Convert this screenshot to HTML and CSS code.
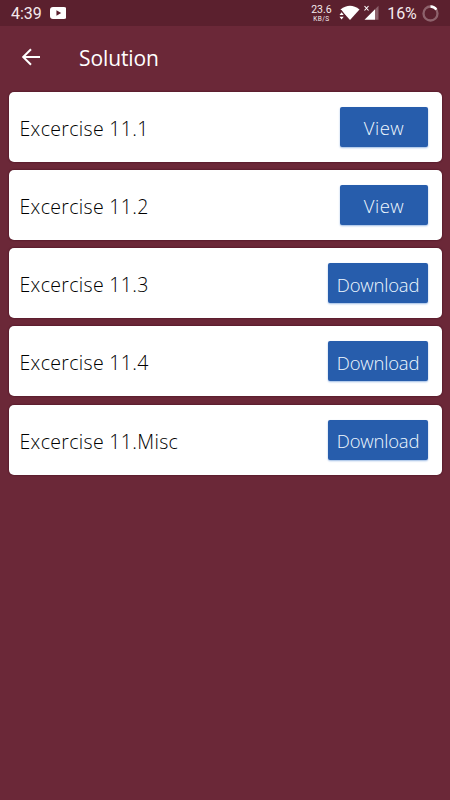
FILE: index.html
```
<!DOCTYPE html>
<html lang="en">
<head>
<meta charset="utf-8">
<title>Solution</title>
<link rel="stylesheet" href="styles.css">
</head>
<body>
<div class="status">
  <span class="time">4:39</span>
  <svg class="video" width="17" height="12" viewBox="0 0 17 12"><rect width="17" height="12" rx="3" fill="#fff"/><path d="M6.5 3.3v5.4L11.3 6z" fill="#5b202e"/></svg>
  <div class="speed"><span>23.6</span><small>KB/S</small></div>
  <svg class="signals" width="42" height="16" viewBox="0 0 42 16"><path d="M1.500 4.500Q11 -3 20.500 4.500L11 15Z" fill="#fff"/><path d="M-1 10.700V6.500L2.500 5L6.500 10.700V15.500H-1Z" fill="#5b202e"/><path d="M.5 10L2.600 7.300L4.700 10ZM.5 11.700H4.700L2.600 14.400Z" fill="#fff"/><path d="M25.500 1l4 4.500m0-4.500l-4 4.500" stroke="#fff" stroke-width="1.100"/><path d="M25.500 14.800L36 4.300V14.800Z" fill="#fff"/><path d="M36 4.300L39.500 .8V14.800H36Z" fill="#8e626c"/></svg>
  <span class="percent">16%</span>
  <svg class="battery" width="17" height="17" viewBox="0 0 17 17"><circle cx="8.500" cy="8.500" r="7" fill="none" stroke="#8e626c" stroke-width="2.300"/><path d="M8.500 1.500A7 7 0 0 1 14.400 4.700" fill="none" stroke="#fff" stroke-width="2.300"/></svg>
</div>
<header class="bar">
  <svg width="20" height="18" viewBox="0 0 20 18" fill="none" stroke="#fff" stroke-width="2"><path d="M19 9H2.500M10 1.200L2.200 9l7.800 7.800"/></svg>
  <h1>Solution</h1>
</header>
<main class="list">
  <section class="card"><span class="name">Excercise 11.1</span><button class="btn view">View</button></section>
  <section class="card"><span class="name">Excercise 11.2</span><button class="btn view">View</button></section>
  <section class="card"><span class="name">Excercise 11.3</span><button class="btn">Download</button></section>
  <section class="card"><span class="name">Excercise 11.4</span><button class="btn">Download</button></section>
  <section class="card"><span class="name">Excercise 11.Misc</span><button class="btn">Download</button></section>
</main>
</body>
</html>
```
FILE: styles.css
```
* { box-sizing: border-box; }
body {
  margin: 0;
  height: 800px;
  overflow: hidden;
  background: #6b2838;
  font-family: "Open Sans", "Noto Sans", sans-serif;
}
.status {
  display: flex;
  align-items: center;
  height: 26px;
  padding: 0 11px;
  background: #5b202e;
  color: #f5eaed;
  font-family: Roboto, sans-serif;
  font-size: 16px;
  font-weight: 400;
}
.time { width: 39px; white-space: nowrap; }
.speed {
  display: flex;
  flex-direction: column;
  align-items: center;
  width: 22px;
  margin-left: 244px;
  font-size: 10.5px;
}
.speed small { font-size: 6.5px; line-height: 7px; letter-spacing: .4px; }
.speed span { line-height: 12px; }
.signals { margin-left: 7px; flex: none; }
.percent { width: 31px; margin-left: 6px; font-size: 16px; letter-spacing: -.1px; }
.battery { margin-left: 4px; flex: none; }
.bar {
  display: flex;
  align-items: center;
  height: 65.500px;
  padding: 0 0 3px 21px;
}
.bar h1 {
  margin: 2px 0 0 38px;
  color: #fff;
  font-size: 21px;
  font-weight: 400;
  letter-spacing: -.1px;
}
.list { display: grid; gap: 8.300px; padding: 0 8.500px 0 8.500px; }
.card {
  display: flex;
  align-items: center;
  justify-content: space-between;
  height: 70px;
  padding: 0 13.500px 0 11px;
  border-radius: 5px;
  background: #fff;
  box-shadow: 0 0 2px #3c0817;
}
.name {
  padding-top: 3px;
  color: #000;
  font-size: 19.500px;
  font-weight: 300;
  letter-spacing: .33px;
}
.btn {
  width: 100px;
  height: 40px;
  padding: 2px 0 0;
  border: 0;
  border-radius: 2px;
  background: #275dac;
  box-shadow: 0 1px 2px #9dbbe4;
  color: #f0f9ff;
  font: 300 18.500px "Open Sans", "Noto Sans", sans-serif;
  letter-spacing: -.2px;
}
.view { width: 88px; letter-spacing: .5px; }
```
